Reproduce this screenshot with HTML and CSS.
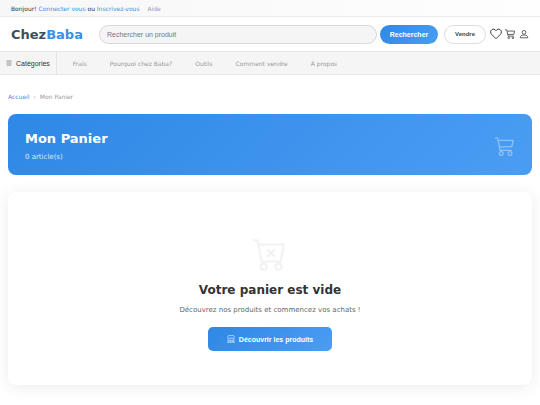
FILE: index.html
```html
<!DOCTYPE html>
<html lang="fr">
<head>
  <meta charset="UTF-8">
  <meta name="viewport" content="width=device-width, initial-scale=1.0">
  <title>Mon Panier - ChezBaba</title>
  <link rel="stylesheet" href="styles.css">
</head>
<body>
  <div class="top-bar">
    <span class="greeting">Bonjour! <a href="#">Connecter vous</a> ou <a href="#">Inscrivez-vous</a></span>
    <a class="help" href="#">Aide</a>
  </div>

  <header class="header">
    <a class="logo" href="#">Chez<span>Baba</span></a>
    <form class="search">
      <input type="text" placeholder="Rechercher un produit" aria-label="Rechercher un produit">
      <button class="btn-search" type="button">Rechercher</button>
    </form>
    <div class="actions">
      <button class="btn-sell" type="button">Vendre</button>
      <a class="icon-heart" href="#" aria-label="Favoris">
        <svg viewBox="0 0 24 24"><path d="M12 21.500 3.200 12.700C.4 9.900.6 5.600 3.300 3.500 6 1.400 9.900 2.200 12 5.500c2.100-3.300 6-4.100 8.700-2 2.700 2.100 2.900 6.400.1 9.200z"/></svg>
      </a>
      <a class="icon-cart" href="#" aria-label="Panier">
        <svg viewBox="0 0 24 24"><path d="M0 2h4l3.500 15h13.500M5 5h18l-2 8H7"/><circle cx="9" cy="21" r="2"/><circle cx="19" cy="21" r="2"/></svg>
      </a>
      <a class="icon-user" href="#" aria-label="Mon compte">
        <svg viewBox="0 0 24 24"><circle cx="12" cy="8" r="4.500"/><path d="M3 21c0-5 3.500-6.500 9-6.500s9 1.500 9 6.500z"/></svg>
      </a>
    </div>
  </header>

  <nav class="nav">
    <button class="categories" type="button">
      <svg viewBox="0 0 12 12"><path d="M1 2h10M1 6h10M1 10h10"/></svg>
      Catégories
    </button>
    <a href="#">Frais</a>
    <a href="#">Pourquoi chez Baba?</a>
    <a href="#">Outils</a>
    <a href="#">Comment vendre</a>
    <a href="#">À propos</a>
  </nav>

  <main class="container">
    <div class="breadcrumb">
      <a href="#">Accueil</a>
      <span>›</span>
      <span>Mon Panier</span>
    </div>

    <section class="cart-header">
      <div>
        <h1>Mon Panier</h1>
        <p>0 article(s)</p>
      </div>
      <svg class="cart-icon" viewBox="0 0 16 16"><path d="M0 1.500A.5.500 0 0 1 .5 1H2a.5.500 0 0 1 .485.379L2.890 3H14.500a.5.500 0 0 1 .490.598l-1 5a.5.500 0 0 1-.465.401l-9.397.472L4.415 11H13a.5.500 0 0 1 0 1H4a.5.500 0 0 1-.491-.408L2.010 3.607 1.610 2H.5a.5.500 0 0 1-.5-.5M3.102 4l.840 4.479 9.144-.459L13.890 4zM5 12a2 2 0 1 0 0 4 2 2 0 0 0 0-4m7 0a2 2 0 1 0 0 4 2 2 0 0 0 0-4m-7 1a1 1 0 1 1 0 2 1 1 0 0 1 0-2m7 0a1 1 0 1 1 0 2 1 1 0 0 1 0-2"/></svg>
    </section>

    <section class="empty-cart">
      <svg class="empty-icon" viewBox="0 0 16 16"><path d="M7.354 5.646a.5.500 0 1 0-.708.708L7.793 7.500 6.646 8.646a.5.500 0 1 0 .708.708L8.500 8.207l1.146 1.147a.5.500 0 0 0 .708-.708L9.207 7.500l1.147-1.146a.5.500 0 0 0-.708-.708L8.500 6.793z"/><path d="M.5 1a.5.500 0 0 0 0 1h1.110l.401 1.607 1.498 7.985A.5.500 0 0 0 4 12h1a2 2 0 1 0 0 4 2 2 0 0 0 0-4h7a2 2 0 1 0 0 4 2 2 0 0 0 0-4h1a.5.500 0 0 0 .491-.408l1.500-8A.5.500 0 0 0 14.500 3H2.890l-.405-1.621A.5.500 0 0 0 2 1zm3.915 10L3.102 4h10.796l-1.313 7zM6 14a1 1 0 1 1-2 0 1 1 0 0 1 2 0m7 0a1 1 0 1 1-2 0 1 1 0 0 1 2 0"/></svg>
      <h2>Votre panier est vide</h2>
      <p>Découvrez nos produits et commencez vos achats !</p>
      <button class="btn-discover" type="button">
        <svg viewBox="0 0 16 16"><path d="M3 1h10l2.500 4c0 2.700-3.500 2.700-3.750.3C11.500 7.700 8.200 7.700 8 5.300 7.800 7.700 4.500 7.700 4.250 5.300 4 7.700.5 7.700.5 5zM2 8v7M14 8v7M0 15.500h16M4 15v-5h3v5M9.500 10h3v3h-3z"/></svg>
        Découvrir les produits
      </button>
    </section>
  </main>
</body>
</html>
```

FILE: styles.css
```css
* {
  box-sizing: border-box;
  margin: 0;
  padding: 0;
}

body {
  font-family: "DejaVu Sans", sans-serif;
  font-size: 6px;
  color: #333;
  background: #fff;
}

a {
  color: #3a90e8;
  text-decoration: none;
}

button,
input {
  font-family: "Liberation Sans", sans-serif;
}

button {
  cursor: pointer;
}

svg {
  display: block;
  fill: none;
  stroke: currentColor;
}

/* Top bar */
.top-bar {
  display: flex;
  align-items: center;
  gap: 8px;
  height: 17px;
  padding: 0 11px;
  background: linear-gradient(90deg, #f7f7f7, #fefefe);
  border-bottom: 1px solid #ebebeb;
}

.top-bar .help {
  color: #999;
}

/* Header */
.header {
  display: flex;
  align-items: center;
  height: 34px;
  padding: 0 11px;
}

.logo {
  width: 88px;
  font-size: 13px;
  font-weight: bold;
  color: #3d4f58;
}

.logo span {
  color: #3a90e8;
}

.search {
  display: flex;
  flex: 1;
  gap: 3px;
}

.search input {
  flex: 1;
  min-width: 0;
  height: 19px;
  padding: 0 7px;
  font-size: 7px;
  color: #333;
  background: #f5f5f5;
  border: 1px solid #d8d8d8;
  border-radius: 10px;
}

.search input::placeholder {
  color: #757575;
}

.btn-search {
  width: 58px;
  height: 19px;
  font-size: 7px;
  font-weight: bold;
  color: #fff;
  background: linear-gradient(135deg, #2f88e5, #4a9df3);
  border: none;
  border-radius: 10px;
}

.actions {
  display: flex;
  align-items: center;
  margin-left: 6px;
}

.actions a {
  color: #444;
}

.btn-sell {
  width: 42px;
  height: 19px;
  font-size: 6px;
  font-weight: bold;
  color: #444;
  background: #fff;
  border: 1px solid #ddd;
  border-radius: 10px;
}

.icon-heart svg {
  width: 12px;
  height: 12px;
  margin-left: 4px;
  stroke-width: 2;
}

.icon-cart svg {
  width: 10px;
  height: 10px;
  margin-left: 3px;
  stroke-width: 2;
}

.icon-user svg {
  width: 10px;
  height: 10px;
  margin-left: 4px;
  stroke-width: 2;
}

/* Navigation */
.nav {
  display: flex;
  align-items: center;
  gap: 23px;
  height: 24px;
  background: #f5f5f5;
  border-top: 1px solid #e8e8e8;
  border-bottom: 1px solid #e8e8e8;
}

.nav a {
  color: #999;
}

.categories {
  display: flex;
  align-items: center;
  gap: 4px;
  height: 100%;
  margin-right: -7px;
  padding: 0 6px;
  font-size: 7px;
  color: #333;
  background: none;
  border: none;
  border-right: 1px solid #e4e4e4;
}

.categories svg {
  width: 6px;
  height: 6px;
}

/* Page content */
.container {
  padding: 18px 8px;
}

.breadcrumb {
  display: flex;
  gap: 4px;
  margin-bottom: 13px;
  line-height: 8px;
  color: #999;
}

.cart-header {
  display: flex;
  align-items: center;
  justify-content: space-between;
  margin-bottom: 17px;
  padding: 16px 17px 14px;
  color: #fff;
  background: linear-gradient(135deg, #2f88e5, #4a9df3);
  border-radius: 8px;
}

.cart-header h1 {
  margin-bottom: 5px;
  font-size: 13px;
  line-height: 18px;
}

.cart-header p {
  font-size: 7px;
  line-height: 8px;
  opacity: 0.8;
}

.cart-icon {
  width: 20px;
  height: 20px;
  fill: currentColor;
  stroke: none;
  opacity: 0.4;
}

.empty-cart {
  display: flex;
  flex-direction: column;
  align-items: center;
  padding: 45px 17px 34px;
  background: #fff;
  border-radius: 8px;
  box-shadow: 0 2px 16px rgba(0, 0, 0, 0.08);
}

.empty-icon {
  width: 34px;
  height: 34px;
  margin-bottom: 11px;
  color: #f2f2f2;
  fill: currentColor;
  stroke: none;
}

.empty-cart h2 {
  margin-bottom: 7px;
  font-size: 12px;
  line-height: 16px;
}

.empty-cart p {
  margin-bottom: 12px;
  font-size: 7px;
  line-height: 10px;
  color: #666;
}

.btn-discover {
  display: flex;
  align-items: center;
  gap: 4px;
  height: 24px;
  padding: 0 19px;
  font-size: 7px;
  font-weight: bold;
  color: #fff;
  background: linear-gradient(135deg, #2f88e5, #4a9df3);
  border: none;
  border-radius: 5px;
}

.btn-discover svg {
  width: 8px;
  height: 8px;
}
```
